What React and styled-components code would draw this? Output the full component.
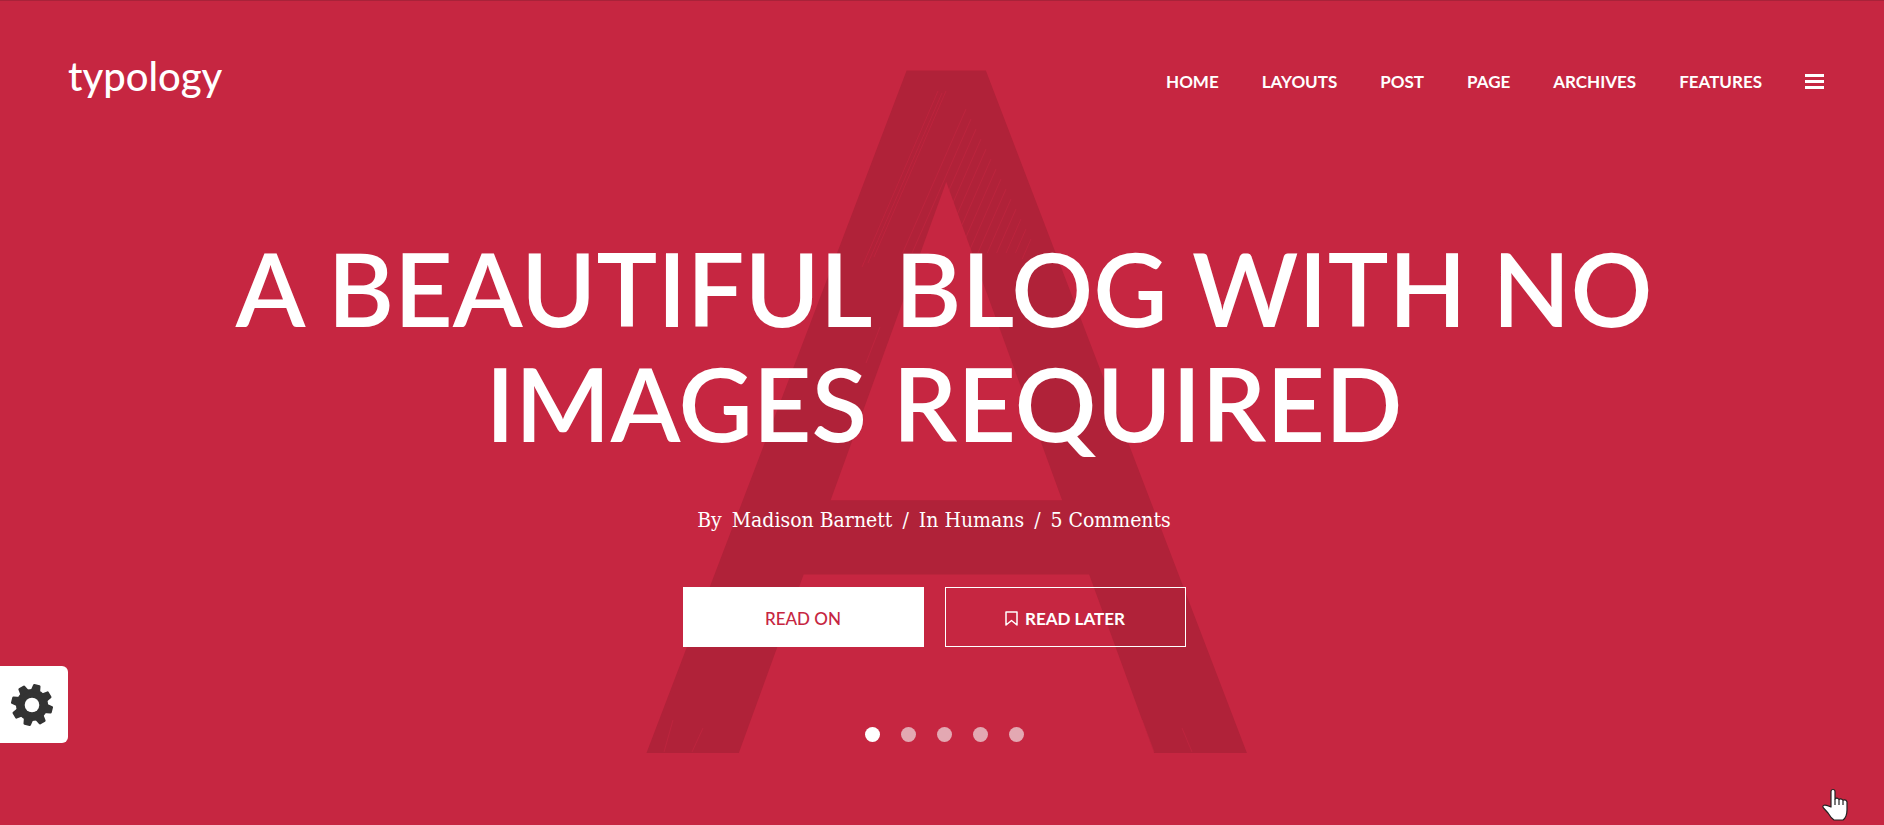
import React, { useState } from 'react';
import styled, { createGlobalStyle } from 'styled-components';

const GlobalStyle = createGlobalStyle`
  * {
    box-sizing: border-box;
  }

  body {
    margin: 0;
    background: #c62641;
    color: #ffffff;
    font-family: Lato, sans-serif;
  }
`;

const Page = styled.div`
  position: relative;
  min-height: 100vh;
  padding: 0 60px 0 64px;
  overflow: hidden;
  background: #c62641;
  border-top: 1px solid #a82239;
`;

const Backdrop = styled.div`
  position: absolute;
  inset: 0;
  padding-left: 8px;
  overflow: hidden;
  pointer-events: none;
  text-align: center;
`;

const BackdropLetter = styled.span`
  display: block;
  margin-top: -56px;
  font-family: Roboto, sans-serif;
  font-size: 960px;
  font-weight: 400;
  line-height: 960px;
  color: #b02239;
`;

const Scratches = styled.svg`
  position: absolute;
  top: 0;
  left: 50%;
  margin-left: -300px;
`;

const Header = styled.header`
  position: relative;
  display: flex;
  align-items: center;
  justify-content: space-between;
  height: 162px;
`;

const Logo = styled.a`
  padding: 0 0 12px 4px;
  color: #ffffff;
  font-size: 40px;
  font-weight: 500;
  line-height: 48px;
  text-decoration: none;
`;

const Nav = styled.nav`
  display: flex;
  align-items: center;
  gap: 43px;
`;

const NavLink = styled.a`
  color: #ffffff;
  font-size: 17px;
  font-weight: 700;
  line-height: 24px;
  text-decoration: none;
  text-transform: uppercase;
`;

const MenuButton = styled.button`
  display: flex;
  padding: 0;
  border: 0;
  background: none;
  color: #ffffff;
  cursor: pointer;
`;

const Hero = styled.main`
  position: relative;
  display: flex;
  flex-direction: column;
  align-items: center;
  padding: 67px 0 80px;
`;

const Title = styled.h1`
  max-width: 1500px;
  margin: 0;
  font-size: 102px;
  font-weight: 600;
  line-height: 115px;
  text-align: center;
  text-transform: uppercase;
`;

const Meta = styled.div`
  display: flex;
  gap: 10px;
  margin: 45px 0 52px;
  padding-right: 20px;
  font-family: 'DejaVu Serif Condensed', 'DejaVu Serif', serif;
  font-size: 21px;
  line-height: 30px;
`;

const MetaLink = styled.a`
  color: #ffffff;
  text-decoration: none;
`;

const Actions = styled.div`
  display: flex;
  gap: 21px;
  padding-right: 20px;
`;

const ActionButton = styled.button`
  display: flex;
  align-items: center;
  justify-content: center;
  gap: 7px;
  width: 241px;
  height: 60px;
  padding: 2px 0 0;
  border: 1px solid #ffffff;
  background: ${({ $filled }) => ($filled ? '#ffffff' : 'transparent')};
  color: ${({ $filled }) => ($filled ? '#c62641' : '#ffffff')};
  font-family: inherit;
  font-size: 17px;
  font-weight: ${({ $filled }) => ($filled ? 500 : 700)};
  text-transform: uppercase;
  cursor: pointer;
`;

const Dots = styled.div`
  display: flex;
  gap: 21px;
  margin-top: 80px;
`;

const Dot = styled.button`
  width: 15px;
  height: 15px;
  padding: 0;
  border: 0;
  border-radius: 50%;
  background: ${({ $active }) => ($active ? '#ffffff' : '#e3a8b2')};
  cursor: pointer;
`;

const SettingsButton = styled.button`
  position: absolute;
  left: 0;
  bottom: 82px;
  display: flex;
  align-items: center;
  width: 68px;
  height: 77px;
  padding: 0 0 0 10px;
  border: 0;
  border-radius: 0 6px 6px 0;
  background: #ffffff;
  cursor: pointer;
`;

const Pointer = styled.svg`
  position: absolute;
  right: 35px;
  bottom: 3px;
`;

const menu = ['Home', 'Layouts', 'Post', 'Page', 'Archives', 'Features'];

// brush marks, as [x1, y1, x2, y2]
const rightMarks = Array.from({ length: 14 }, (_, i) => {
  const x = 324 + i * 5;
  const y = 108 + i * 10;
  const length = Math.max(20, 252 - y);
  return [x, y, x - length * 0.44, y + length];
});

const leftMarks = [
  [296, 90, 220, 266],
  [300, 92, 226, 262],
  [304, 90, 232, 256],
  [238, 326, 224, 362],
  [31, 719, 22, 751],
  [61, 727, 50, 751],
  [500, 719, 512, 751],
  [540, 727, 550, 751],
];

const Gear = () => (
  <svg width="44" height="44" viewBox="-22 -22 44 44" aria-hidden="true">
    <g fill="#333333" transform="rotate(14)">
      <circle r="16" />
      {[0, 45, 90, 135, 180, 225, 270, 315].map((angle) => (
        <path key={angle} d="M-5 -13 L-3.8 -20 Q-3.6 -21 -2.6 -21 H2.6 Q3.6 -21 3.8 -20 L5 -13 Z" transform={`rotate(${angle})`} />
      ))}
    </g>
    <circle r="7.3" fill="#ffffff" />
  </svg>
);

const App = () => {
  const [slide, setSlide] = useState(0);

  return (
    <Page>
      <GlobalStyle />
      <Backdrop aria-hidden="true">
        <BackdropLetter>A</BackdropLetter>
        <Scratches width="600" height="760" fill="none" stroke="#c62641" strokeOpacity="0.55">
          {[...rightMarks, ...leftMarks].map(([x1, y1, x2, y2]) => (
            <line key={`${x1}-${y1}`} x1={x1} y1={y1} x2={x2} y2={y2} />
          ))}
        </Scratches>
      </Backdrop>

      <Header>
        <Logo href="#">typology</Logo>
        <Nav>
          {menu.map((item) => (
            <NavLink key={item} href="#">{item}</NavLink>
          ))}
          <MenuButton aria-label="Menu">
            <svg width="19" height="16" viewBox="0 0 19 16" fill="currentColor">
              <path d="M0 0h19v3H0zM0 6h19v3H0zM0 12h19v3H0z" />
            </svg>
          </MenuButton>
        </Nav>
      </Header>

      <Hero>
        <Title>A beautiful blog with no images required</Title>
        <Meta>
          <span>By</span>
          <MetaLink href="#">Madison Barnett</MetaLink>
          <span>/</span>
          <MetaLink href="#">In Humans</MetaLink>
          <span>/</span>
          <MetaLink href="#">5 Comments</MetaLink>
        </Meta>
        <Actions>
          <ActionButton $filled>Read on</ActionButton>
          <ActionButton>
            <svg width="13" height="15" viewBox="0 0 13 15" fill="none" stroke="currentColor" strokeWidth="1.5" aria-hidden="true">
              <path d="M1 1h11v13L6.500 9.500 1 14z" strokeLinejoin="round" />
            </svg>
            Read later
          </ActionButton>
        </Actions>
        <Dots>
          {[0, 1, 2, 3, 4].map((n) => (
            <Dot key={n} $active={n === slide} aria-label={`Slide ${n + 1}`} onClick={() => setSlide(n)} />
          ))}
        </Dots>
      </Hero>

      <SettingsButton aria-label="Settings">
        <Gear />
      </SettingsButton>

      <Pointer width="27" height="34" viewBox="0 0 27 34" fill="#ffffff" stroke="#222222" strokeWidth="1.2" strokeLinejoin="round" aria-hidden="true">
        <path d="M9 19V3.500a2 2 0 0 1 4 0V11q2-2 4 .5 2-1.500 4 .7 3-1 4 1.500V22q0 7-4 10h-9Q9 30 6 25L1.500 20Q0 18 2 17.200 4 16.500 9 19z" />
        <path d="M13 11v6M17 11.500V17M21 12.200V17" />
      </Pointer>
    </Page>
  );
};

export default App;
